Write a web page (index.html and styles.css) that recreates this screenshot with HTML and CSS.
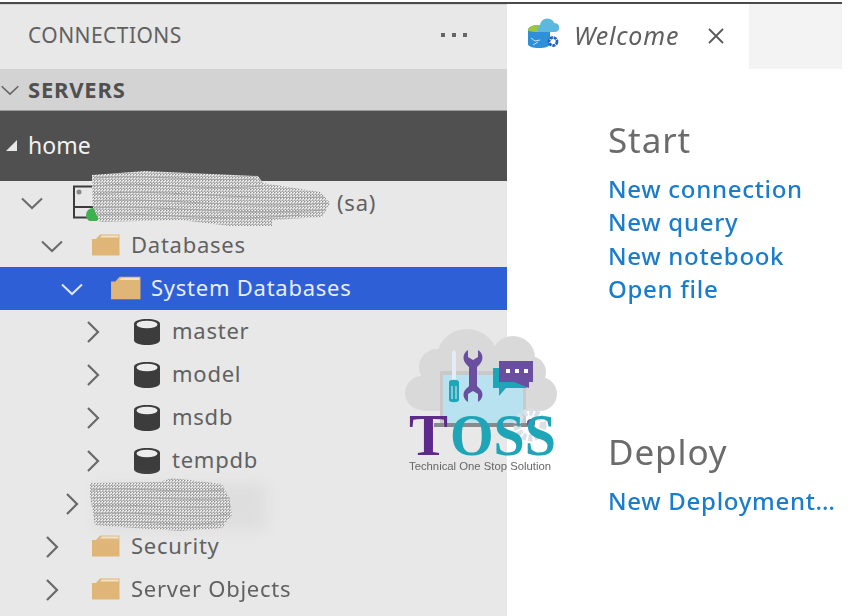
FILE: index.html
```html
<!DOCTYPE html>
<html lang="en">
<head>
<meta charset="utf-8">
<title>Azure Data Studio</title>
<link rel="stylesheet" href="styles.css">
</head>
<body>
<svg class="defs" width="0" height="0" aria-hidden="true">
  <defs>
    <symbol id="chev-down" viewBox="0 0 24 24"><path d="M2 7.500 12 17 22 7.500" fill="none" stroke="currentColor" stroke-width="2"/></symbol>
    <symbol id="chev-right" viewBox="0 0 24 24"><path d="M7 2 17 12 7 22" fill="none" stroke="currentColor" stroke-width="2.200"/></symbol>
    <symbol id="folder" viewBox="0 0 28 24"><path d="M0 5 4 5 8 .5H27.500V21.500H0z" fill="#dfb678"/><path d="M8 3.500 10 1.500H26.500V3.500z" fill="#f3e3c4"/></symbol>
    <symbol id="db" viewBox="0 0 26 26"><path d="M0 5C0 1.500 6 0 13 0s13 1.500 13 5v16c0 3.500-6 5-13 5S0 24.500 0 21z" fill="#3c3c3c"/><ellipse cx="13" cy="5.500" rx="10.500" ry="3.800" fill="#ececec"/></symbol>
    <pattern id="scrib" width="3" height="3" patternUnits="userSpaceOnUse">
      <rect width="3" height="3" fill="#c6c6c6"/>
      <rect width="1" height="1" fill="#fff"/><rect x="2" y="1" width="1" height="1" fill="#f2f2f2"/>
      <rect x="1" width="1" height="1" fill="#8f8f8f"/><rect y="2" width="1" height="1" fill="#9c9c9c"/>
    </pattern>
    <filter id="soft" x="-20%" y="-40%" width="140%" height="180%"><feGaussianBlur stdDeviation="7"/></filter>
  </defs>
</svg>

<div class="app">
  <aside class="sidebar">
    <header class="side-title">
      <span>CONNECTIONS</span>
      <span class="more"><i></i><i></i><i></i></span>
    </header>
    <div class="section-head">
      <svg class="section-chev"><use href="#chev-down"/></svg>
      <span>SERVERS</span>
    </div>
    <div class="group-head">
      <span class="corner"></span>
      <span>home</span>
    </div>
    <ul class="tree">
      <li class="row d1">
        <svg class="chev"><use href="#chev-down"/></svg>
        <svg class="server" viewBox="0 0 28 36">
          <path d="M2 1.500h24v31H2zM2 22h24" fill="none" stroke="#3c3c3c" stroke-width="2"/>
          <circle cx="7" cy="7" r="2.500" fill="#8a8a8a"/>
          <circle cx="21" cy="30" r="7" fill="#3fb04f"/>
        </svg>
        <span class="label server-name">(sa)</span>
      </li>
      <li class="row d2"><svg class="chev"><use href="#chev-down"/></svg><svg class="icon"><use href="#folder"/></svg><span class="label">Databases</span></li>
      <li class="row d3 selected"><svg class="chev"><use href="#chev-down"/></svg><svg class="icon icon-sel"><use href="#folder"/></svg><span class="label">System Databases</span></li>
      <li class="row d4"><svg class="chev"><use href="#chev-right"/></svg><svg class="icon"><use href="#db"/></svg><span class="label">master</span></li>
      <li class="row d4"><svg class="chev"><use href="#chev-right"/></svg><svg class="icon"><use href="#db"/></svg><span class="label">model</span></li>
      <li class="row d4"><svg class="chev"><use href="#chev-right"/></svg><svg class="icon"><use href="#db"/></svg><span class="label">msdb</span></li>
      <li class="row d4"><svg class="chev"><use href="#chev-right"/></svg><svg class="icon"><use href="#db"/></svg><span class="label">tempdb</span></li>
      <li class="row d3"><svg class="chev"><use href="#chev-right"/></svg></li>
      <li class="row d2"><svg class="chev"><use href="#chev-right"/></svg><svg class="icon"><use href="#folder"/></svg><span class="label">Security</span></li>
      <li class="row d2"><svg class="chev"><use href="#chev-right"/></svg><svg class="icon"><use href="#folder"/></svg><span class="label">Server Objects</span></li>
    </ul>
  </aside>

  <main class="editor">
    <div class="tabs">
      <div class="tab">
        <svg class="tab-icon" viewBox="0 0 32 32">
          <path d="M1 14c0-3 5-5 11-5s11 2 11 5v14c0 2.500-5 4-11 4S1 30.500 1 28z" fill="#2f8fd8"/>
          <path d="M1 14c0-3 5-5 11-5 3 0 5 .5 7 1.500-3 3-5 5-8 5.500-5 0-10-.5-10-2z" fill="#9cc63c"/>
          <path d="M4 22l4 3 5-1M6 29l5-3" fill="none" stroke="#bfe3f8" stroke-width="1"/>
          <path d="M13 16c-3 0-4-5 0-6 0-5 5-9 10-7 3 1 4 3 4 4 4 0 6 3 5 6-.5 2-2 3-4 3z" fill="#5cb8de"/>
          <circle cx="26" cy="25.500" r="4" fill="#fff" stroke="#2560c0" stroke-width="2.800" stroke-dasharray="3 .8"/>
        </svg>
        <span class="tab-label">Welcome</span>
        <svg class="tab-close" viewBox="0 0 16 16"><path d="M1 1 15 15M15 1 1 15" fill="none" stroke="#5a5a5a" stroke-width="1.800"/></svg>
      </div>
      <div class="tabs-rest"></div>
    </div>
    <div class="welcome">
      <section class="block">
        <h2>Start</h2>
        <a>New connection</a>
        <a>New query</a>
        <a>New notebook</a>
        <a>Open file</a>
      </section>
      <section class="block block-deploy">
        <h2>Deploy</h2>
        <a>New Deployment…</a>
      </section>
    </div>
  </main>
</div>

<svg class="scribbles" viewBox="0 0 850 616" aria-hidden="true">
  <rect x="96" y="484" width="170" height="46" fill="#dedede" filter="url(#soft)"/>
  <path d="M92 175 145 171 258 176 263 183 320 192 330 203 322 217 272 220 272 226 230 226 180 220 100 222 92 205z" fill="url(#scrib)"/>
  <path d="M94 178C150 174 200 182 256 179M92 186C150 180 200 192 262 186M94 194C160 188 220 200 324 197M94 201C150 196 240 210 328 203M94 208C150 204 230 216 326 210M96 215C150 211 210 223 300 215" fill="none" stroke="#a4a4a4" stroke-width="1"/>
  <path d="M90 483 160 482 172 478 222 484 230 500 232 515 222 528 180 531 120 527 95 525 90 495z" fill="url(#scrib)"/>
  <path d="M92 490C130 486 180 494 224 490M92 498C140 495 190 502 230 498M92 506C130 503 190 510 231 506M94 514C140 510 190 520 230 514M98 522C140 519 180 528 224 522" fill="none" stroke="#a4a4a4" stroke-width="1"/>
</svg>

<svg class="logo" viewBox="0 0 170 160" role="img" aria-label="TOSS logo">
  <g fill="#d9d9d9">
    <circle cx="72" cy="40" r="31"/><circle cx="42" cy="47" r="18"/><circle cx="118" cy="38" r="22"/><circle cx="135" cy="52" r="16"/>
    <circle cx="27" cy="73" r="17"/><circle cx="145" cy="74" r="17"/><rect x="27" y="48" width="118" height="43"/>
  </g>
  <rect x="45" y="51" width="86" height="54" fill="#c9c9c9"/>
  <rect x="48" y="55" width="80" height="50" fill="#b9e2f0"/>
  <rect x="39" y="103" width="98" height="4" fill="#8a8a8a"/>
  <path d="M57 34c0-5 4-5 4 0v26h-4z" fill="#e6ecf5"/>
  <path d="M54 62c0-3 10-3 10 0v18c0 3-10 3-10 0z" fill="#1fa5b8"/>
  <path d="M57 66v13M61 66v13" stroke="#e6ecf5"/>
  <path d="M73 30v7l5 3 5-3v-7c5 3 6 9 2 14l-3 3v19l3 3c4 4 3 10-2 13v-8l-5-3-5 3v8c-5-3-6-9-2-13l3-3V47l-3-3c-4-5-3-11 2-14z" fill="#6a4ea0"/>
  <path d="M98 48h6v14h26l2 6h-21l-7 8v-8h-6z" fill="#1fa5b8"/>
  <rect x="104" y="41" width="34" height="21" fill="#6a4ea0"/>
  <path d="M119 62h15v6z" fill="#6a4ea0"/>
  <g fill="#fff"><rect x="111" y="49" width="4" height="4"/><rect x="120" y="49" width="4" height="4"/><rect x="129" y="49" width="4" height="4"/></g>
  <circle cx="135" cy="105" r="13" fill="none" stroke="#dcdfe8" stroke-width="7" stroke-dasharray="4 2"/>
  <circle cx="136" cy="103" r="4" fill="#6a4ea0"/>
  <text class="logo-t" x="14" y="135" textLength="39" lengthAdjust="spacingAndGlyphs">T</text>
  <text class="logo-oss" x="55" y="135" textLength="106" lengthAdjust="spacingAndGlyphs">OSS</text>
  <text class="logo-tag" x="14" y="150" textLength="142" lengthAdjust="spacingAndGlyphs">Technical One Stop Solution</text>
</svg>
</body>
</html>
```
FILE: styles.css
```css
* { box-sizing: border-box; }
html, body { margin: 0; height: 100%; background: #fff; overflow: hidden; }
body { position: relative; width: 850px; height: 616px; font-family: "Noto Sans", "Open Sans", sans-serif; }
.defs { position: absolute; }

.app {
  display: flex;
  width: 842px;
  height: 616px;
  margin-top: 2px;
  border-top: 2px solid #4a4a48;
  filter: blur(.5px);
}

.sidebar { width: 507px; flex: none; height: 612px; background: #e8e8e8; display: flex; flex-direction: column; border-top: 1px solid #d4d4d4; }
.side-title { height: 64px; flex: none; display: flex; align-items: center; justify-content: space-between; padding: 0 40px 4px 28px; color: #616161; font-size: 21px; letter-spacing: .45px; }
.more { display: flex; gap: 7px; }
.more i { width: 4px; height: 4px; background: #666; }

.section-head { height: 41px; flex: none; display: flex; align-items: center; padding-bottom: 2px; background: #d3d3d3; color: #505050; font-size: 22px; font-weight: 700; letter-spacing: .8px; }
.section-chev { width: 20px; height: 20px; margin: 2px 8px 0 0; color: #666; }

.group-head { height: 71px; flex: none; display: flex; align-items: center; padding: 0 0 3px 28px; background: #505050; border-top: 1px solid #9a9a9a; color: #f2f2f2; font-size: 23px; position: relative; }
.corner { position: absolute; left: 6px; top: 29px; width: 0; height: 0; border-style: solid; border-width: 0 0 11px 11px; border-color: transparent transparent #e8e8e8 transparent; }

.tree { list-style: none; margin: 0; padding: 0; }
.row { height: 43px; display: flex; align-items: center; color: #616161; font-size: 22px; letter-spacing: .75px; }
.label { padding-bottom: 4px; }
.d1 { padding-left: 20px; }
.d2 { padding-left: 40px; }
.d3 { padding-left: 60px; }
.d4 { padding-left: 81px; }
.chev { width: 24px; height: 24px; flex: none; color: #6a6a6a; }
.icon { width: 28px; height: 26px; margin: 0 11px 0 28px; flex: none; }
.icon-sel { width: 30px; margin: 0 10px 0 27px; }
.server { width: 28px; height: 36px; margin: 0 11px 0 28px; flex: none; }
.server-name { margin-left: 226px; padding-bottom: 2px; }
.selected { background: #2f5fd6; color: #e8eefc; }
.selected .chev { color: #dfe7fa; }

.editor { flex: 1; display: flex; flex-direction: column; background: #fff; min-width: 0; }
.tabs { height: 65px; flex: none; display: flex; }
.tab { width: 242px; flex: none; display: flex; align-items: center; padding: 0 0 1px 20px; color: #5f5f5f; background: #fff; }
.tab-icon { width: 32px; height: 32px; flex: none; margin: 0 15px 8px 0; }
.tab-label { font-style: italic; font-size: 25px; letter-spacing: .8px; width: 134px; flex: none; padding-bottom: 2px; }
.tab-close { width: 16px; height: 16px; flex: none; }
.tabs-rest { flex: 1; background: #f3f3f3; }

.welcome { padding: 47px 0 0 101px; }
.block { display: flex; flex-direction: column; align-items: flex-start; }
.block-deploy { margin-top: 122px; }
.block h2 { margin: 0 0 8px; font-size: 35px; line-height: 48px; letter-spacing: .9px; font-weight: 400; color: #6b6b6b; }
.block a { font-size: 24px; font-weight: 500; line-height: 33.400px; letter-spacing: .7px; color: #1a7ccb; white-space: nowrap; }

.scribbles { position: absolute; left: 0; top: 0; width: 850px; height: 616px; pointer-events: none; }
.logo { position: absolute; left: 395px; top: 320px; width: 170px; height: 160px; pointer-events: none; }
.logo-t { font: 700 59px "Liberation Serif", serif; fill: #5d2a8c; }
.logo-oss { font: 700 59px "Liberation Serif", serif; fill: #1fa5b8; }
.logo-tag { font: 300 11px "Liberation Sans", sans-serif; fill: #666; }
```
